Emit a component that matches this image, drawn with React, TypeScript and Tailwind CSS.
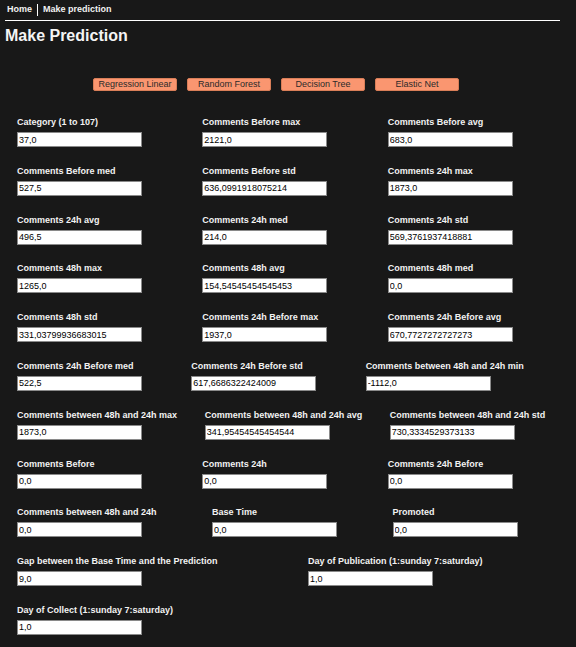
import React from "react";

type Field = { label: string; value: string };

const rows: Field[][] = [
  [
    { label: "Category (1 to 107)", value: "37,0" },
    { label: "Comments Before max", value: "2121,0" },
    { label: "Comments Before avg", value: "683,0" },
  ],
  [
    { label: "Comments Before med", value: "527,5" },
    { label: "Comments Before std", value: "636,0991918075214" },
    { label: "Comments 24h max", value: "1873,0" },
  ],
  [
    { label: "Comments 24h avg", value: "496,5" },
    { label: "Comments 24h med", value: "214,0" },
    { label: "Comments 24h std", value: "569,3761937418881" },
  ],
  [
    { label: "Comments 48h max", value: "1265,0" },
    { label: "Comments 48h avg", value: "154,54545454545453" },
    { label: "Comments 48h med", value: "0,0" },
  ],
  [
    { label: "Comments 48h std", value: "331,03799936683015" },
    { label: "Comments 24h Before max", value: "1937,0" },
    { label: "Comments 24h Before avg", value: "670,7727272727273" },
  ],
  [
    { label: "Comments 24h Before med", value: "522,5" },
    { label: "Comments 24h Before std", value: "617,6686322424009" },
    { label: "Comments between 48h and 24h min", value: "-1112,0" },
  ],
  [
    { label: "Comments between 48h and 24h max", value: "1873,0" },
    { label: "Comments between 48h and 24h avg", value: "341,95454545454544" },
    { label: "Comments between 48h and 24h std", value: "730,3334529373133" },
  ],
  [
    { label: "Comments Before", value: "0,0" },
    { label: "Comments 24h", value: "0,0" },
    { label: "Comments 24h Before", value: "0,0" },
  ],
  [
    { label: "Comments between 48h and 24h", value: "0,0" },
    { label: "Base Time", value: "0,0" },
    { label: "Promoted", value: "0,0" },
  ],
  [
    { label: "Gap between the Base Time and the Prediction", value: "9,0" },
    { label: "Day of Publication (1:sunday 7:saturday)", value: "1,0" },
  ],
  [{ label: "Day of Collect (1:sunday 7:saturday)", value: "1,0" }],
];

const models = ["Regression Linear", "Random Forest", "Decision Tree", "Elastic Net"];

function FieldInput({ field }: { field: Field }) {
  return (
    <div className="flex flex-auto flex-col items-start">
      <label className="text-[9px] leading-[11px] font-bold text-[#f2f2f2] whitespace-nowrap">
        {field.label}
      </label>
      <input
        readOnly
        value={field.value}
        className="mt-[4px] h-[15px] w-[125px] bg-white border border-[#8a8a8a] px-[1px] text-[9px] text-black outline-none"
      />
    </div>
  );
}

export default function App() {
  return (
    <div
      className="min-h-screen bg-[#181818] text-white"
      style={{ fontFamily: '"Liberation Sans", Arial, sans-serif' }}
    >
      <div className="pl-[5px] pr-[16px]">
        <nav className="flex h-[20px] items-center pl-[2px] text-[9px] font-bold text-[#f2f2f2]">
          <span>Home</span>
          <span className="mx-[5px] h-[12px] border-l border-white" />
          <span>Make prediction</span>
        </nav>
        <hr className="border-t border-white" />
        <h1 className="mt-[5px] text-[16px] leading-[20px] font-bold text-[#f4f4f4]">
          Make Prediction
        </h1>
        <div className="mt-[32px] flex gap-[10px] pl-[88px]">
          {models.map((m) => (
            <button
              key={m}
              className="h-[13px] w-[84px] rounded-[2px] border border-[#d97e58] bg-[#fa9670] text-[9px] leading-[11px] text-[#2a2a2a]"
            >
              {m}
            </button>
          ))}
        </div>
      </div>
      <form className="mt-[26px] flex flex-col gap-[18.8px] pl-[17px] pr-[3px]">
        {rows.map((row, i) => (
          <div key={i} className="flex">
            {row.map((f) => (
              <FieldInput key={f.label} field={f} />
            ))}
          </div>
        ))}
      </form>
    </div>
  );
}
